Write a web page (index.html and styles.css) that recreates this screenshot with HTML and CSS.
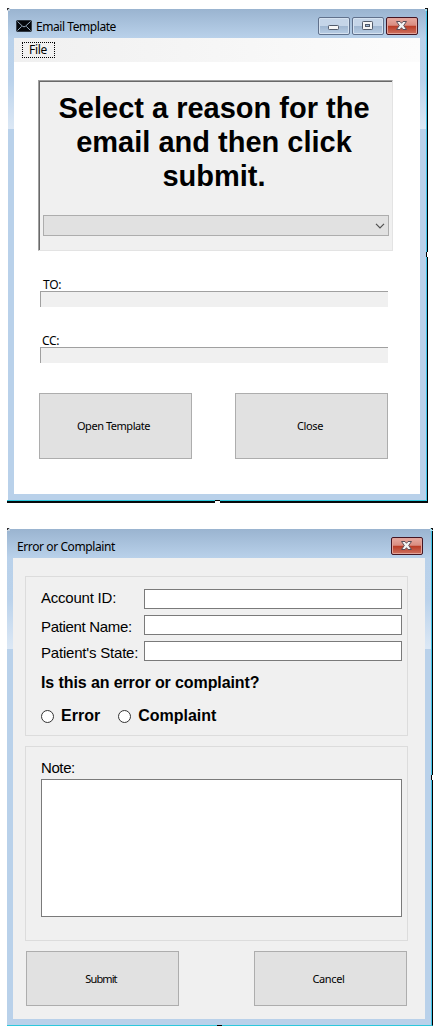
FILE: index.html
```html
<!DOCTYPE html>
<html lang="en">
<head>
<meta charset="utf-8">
<title>Email Template</title>
<link rel="stylesheet" href="styles.css">
</head>
<body>
<section class="window email">
  <header class="titlebar">
    <svg class="mail" width="16" height="12" viewBox="0 0 16 12"><rect x=".3" y=".3" width="15.4" height="11.4" rx="1" fill="#05070b"/><path d="M1.5 1.5 6.5 6.2Q8 7.5 9.5 6.2L14.5 1.5M1.5 10.5 5.7 6.4M14.5 10.5 10.3 6.4" fill="none" stroke="#a9bfd6" stroke-width=".9"/></svg>
    <span class="title t-email">Email Template</span>
    <div class="controls">
      <span class="ctl"><svg width="30" height="16" viewBox="0 0 30 16"><rect x="9.5" y="7.5" width="10" height="4" rx=".8" fill="#f6f6f6" stroke="#525b6b"/></svg></span>
      <span class="ctl"><svg width="30" height="16" viewBox="0 0 30 16"><rect x="9.5" y="3.5" width="10" height="8" rx=".8" fill="#f6f6f6" stroke="#525b6b"/><rect x="12.5" y="6.5" width="4" height="2" fill="#9db9d8" stroke="#525b6b"/></svg></span>
      <span class="ctl red"><svg width="30" height="16" viewBox="0 0 30 16"><path d="M9.5 3.5H13L14.5 5.3 16 3.5H19.5L16.7 7.5 19.5 11.5H16L14.5 9.7 13 11.5H9.5L12.3 7.5Z" fill="#f4f4f4" stroke="#5a4d57"/></svg></span>
    </div>
  </header>
  <main class="client">
    <nav class="menu"><span class="menu-item"><span class="t-file">File</span></span></nav>
    <div class="reason">
      <h1>Select a reason for the<br>email and then click<br>submit.</h1>
      <div class="combo"><svg width="10" height="6" viewBox="0 0 10 6"><path d="M1 .8 5 4.8 9 .8" fill="none" stroke="#505050" stroke-width="1.2"/></svg></div>
    </div>
    <div class="recipient to"><span class="t-to">TO:</span><div class="line"></div></div>
    <div class="recipient cc"><span class="t-cc">CC:</span><div class="line"></div></div>
    <div class="actions"><div class="button"><span class="t-open">Open Template</span></div><div class="button"><span class="t-close">Close</span></div></div>
  </main>
  <i class="corner left"></i><i class="corner right"></i>
  <i class="handle side"></i><i class="handle base"></i>
</section>
<section class="window complaint">
  <header class="titlebar">
    <span class="title t-error">Error or Complaint</span>
    <div class="controls">
      <span class="ctl red"><svg width="30" height="16" viewBox="0 0 30 16"><path d="M9.5 3.5H13L14.5 5.3 16 3.5H19.5L16.7 7.5 19.5 11.5H16L14.5 9.7 13 11.5H9.5L12.3 7.5Z" fill="#f4f4f4" stroke="#5a4d57"/></svg></span>
    </div>
  </header>
  <main class="client">
    <div class="group details">
      <div class="row"><label class="t-acc">Account ID:</label><div class="input"></div></div>
      <div class="row low"><label class="t-name">Patient Name:</label><div class="input"></div></div>
      <div class="row low"><label class="t-state">Patient's State:</label><div class="input"></div></div>
      <div class="question"><span class="t-q">Is this an error or complaint?</span></div>
      <div class="choices"><i class="radio"></i><span class="t-err">Error</span><i class="radio second"></i><span class="t-comp">Complaint</span></div>
    </div>
    <div class="group note">
      <span class="t-note">Note:</span>
      <div class="textarea"></div>
    </div>
    <div class="actions"><div class="button"><span class="t-submit">Submit</span></div><div class="button"><span class="t-cancel">Cancel</span></div></div>
  </main>
  <i class="corner left"></i><i class="corner right"></i>
  <i class="handle side"></i><i class="handle base"></i>
</section>
</body>
</html>
```
FILE: styles.css
```css
* { box-sizing: border-box; }
html { overflow: hidden; }
body { margin: 0; padding: 9px 0 0 7px; width: 439px; height: 1035px; background: #fff; color: #000; font: 12px/16px "Noto Sans", sans-serif; overflow: hidden; }
span, label { white-space: nowrap; }
.window {
  position: relative;
  border-right: 1px solid #000;
  background:
    linear-gradient(#9ab4d0, #b9d1ea) 0 0 / 100% 29px no-repeat,
    linear-gradient(#b9d1ea 0%, #bad2eb 45%, #dce8f5) 0 29px / 100% 91px no-repeat,
    #b9d1ea;
}
.window::after { content: ""; position: absolute; inset: 2px 0 0 auto; width: 1px; background: #3fc4e8; }
.email { width: 421px; height: 494px; padding: 0 7px; border-bottom: 2px solid #06090b; }
.email::before { content: ""; position: absolute; left: 0; top: 0; width: 1px; height: 491px; background: #fff; }
.complaint { width: 426px; height: 497px; margin-top: 26px; padding: 0 7px 0 6px; border-bottom: 1px solid #2cc8dc; }
.titlebar { display: flex; height: 29px; padding: 8px 2px 0 2px; }
.complaint .titlebar { padding-left: 4px; }
.mail { margin-top: 3px; margin-right: 4px; }
.title { line-height: 19px; }
.t-email { letter-spacing: -.44px; }
.t-error { letter-spacing: -.4px; }
.t-file { letter-spacing: -.3px; }
.t-to, .t-cc { letter-spacing: -.3px; }
.t-open { letter-spacing: -.46px; margin-right: 4px; }
.t-close { letter-spacing: -.4px; margin-right: 3px; }
.t-submit { letter-spacing: -.9px; margin-right: 3px; }
.t-cancel { letter-spacing: -.35px; margin-right: 4px; }
.t-acc { letter-spacing: -.22px; }
.t-name { letter-spacing: -.32px; }
.t-state { letter-spacing: -.2px; }
.t-note { letter-spacing: -.4px; }
.t-q { letter-spacing: -.1px; }
.controls { display: flex; gap: 2px; margin-left: auto; }
.ctl { display: block; width: 32px; height: 18px; border: 1px solid #60718c; border-radius: 2px; background: linear-gradient(#c5d5e8 0 48%, #9fb6d0 50%, #b8cde4); box-shadow: inset 0 0 0 1px #d5e2f0; }
.ctl svg { display: block; }
.red { border-color: #441522; background: linear-gradient(#e7aaa1, #d98c80 46%, #b93a24 50%, #ce7261); box-shadow: inset 0 0 0 1px #e2a49b; }
.email .client { height: 456px; background: #fff; }
.menu { display: flex; height: 24px; padding: 4px 8px; background: linear-gradient(90deg, #f0f0f0, #fcfcfc); }
.menu-item { width: 33px; height: 16px; padding-left: 6px; border: 1px dotted #000; line-height: 14px; }
.reason { width: 355px; height: 171px; margin: 18px 0 0 24px; border: 1px solid #e3e3e3; border-top-color: #a0a0a0; border-left-color: #a0a0a0; background: #f0f0f0; box-shadow: inset 1px 1px #696969; padding: 10px 3px 0 4px; }
h1 { margin: 0 4px 0 0; height: 124px; font: bold 29px/34px "Liberation Sans", sans-serif; text-align: center; }
.combo { display: flex; justify-content: flex-end; align-items: center; width: 346px; height: 21px; padding-right: 3px; border: 1px solid #adadad; background: #e1e1e1; }
.recipient { height: 30px; margin: 26px 0 0 26px; }
.recipient span { display: block; height: 14px; margin-left: 3px; line-height: 15px; }
.cc span { margin-left: 2px; }
.line { width: 348px; height: 16px; border: solid #a0a0a0; border-width: 1px 0 0 1px; background: #f0f0f0; }
.email .actions { display: flex; gap: 43px; margin: 30px 0 0 25px; }
.button { display: flex; justify-content: center; align-items: center; width: 153px; height: 66px; border: 1px solid #adadad; background: #e1e1e1; font-size: 11px; }
.complaint .client { height: 461px; padding: 18px 0 0 12px; background: #f0f0f0; }
.group { width: 383px; border: 1px solid #dcdcdc; font: 15px/18px "Liberation Sans", sans-serif; }
.details { height: 160px; padding: 12px 0 0 15px; }
.row { display: flex; height: 26px; }
.row label { width: 103px; }
.low label { padding-top: 3px; }
.input { width: 258px; height: 20px; border: 1px solid #7a7a7a; background: #fff; }
.question { height: 32px; padding-top: 7px; font-weight: bold; font-size: 16px; }
.choices { display: flex; align-items: center; height: 34px; font-weight: bold; font-size: 16px; }
.radio { width: 13px; height: 13px; margin-right: 7px; border: 1px solid #333; border-radius: 50%; background: #fff; }
.second { margin-left: 18px; }
.note { height: 195px; margin-top: 10px; padding: 12px 0 0 15px; }
.note span { display: block; height: 20px; }
.textarea { width: 361px; height: 138px; border: 1px solid #7a7a7a; background: #fff; }
.complaint .actions { display: flex; gap: 75px; margin: 10px 0 0 1px; }
.complaint .button { height: 55px; }
.corner { position: absolute; top: -1px; width: 3px; height: 3px; }
.corner.left { left: 0; background: linear-gradient(135deg, #333 50%, #c7d2df 50%); }
.corner.right { right: -1px; background: linear-gradient(225deg, #111 50%, #a8dff0 50%); }
.handle { position: absolute; z-index: 2; background: #fff; }
.side { width: 2px; height: 5px; right: -1px; border-left: 1px solid #000; }
.email .side { top: 243px; }
.complaint .side { top: 246px; }
.email .client + .corner::after { content: ""; position: absolute; left: 0; top: 492px; width: 420px; height: 1px; background: #2cc8dc; }
.email .base { left: 208px; top: 491px; width: 5px; height: 3px; border-top: 1px solid #000; }
.complaint .base { left: 210px; top: 496px; width: 5px; height: 1px; background: #000; }
```
